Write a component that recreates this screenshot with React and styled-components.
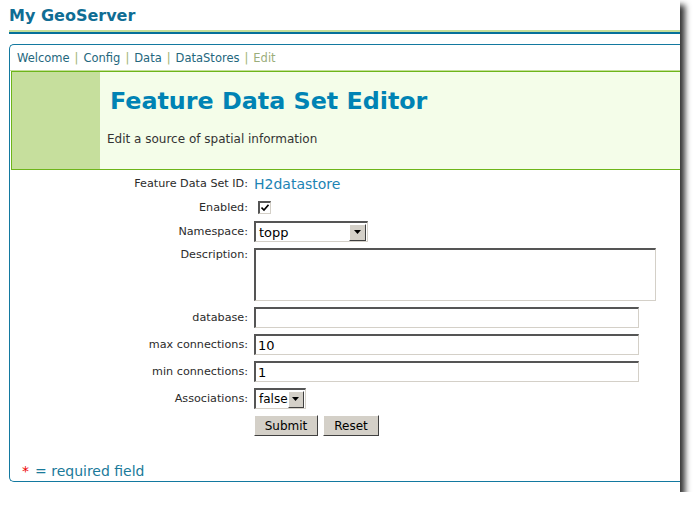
import React from 'react';
import styled, { createGlobalStyle } from 'styled-components';

const GlobalStyle = createGlobalStyle`
  html, body {
    margin: 0;
    padding: 0;
    background: #fff;
  }
  body {
    font-family: 'DejaVu Sans', Verdana, sans-serif;
  }
`;

const Window = styled.div`
  width: 680px;
  height: 492px;
  background: #fff;
  overflow: hidden;
  padding-left: 9px;
  box-sizing: border-box;
  box-shadow: 5px 5px 6px rgba(0, 0, 0, 0.8);
`;

const SiteTitle = styled.h1`
  margin: 0 -10px 0 0;
  padding: 6px 0 4px 0;
  font-size: 16px;
  line-height: 20px;
  font-weight: bold;
  color: #0f6d94;
  border-bottom: 2px solid #c5dd9a;
`;

const TitleRule = styled.div`
  height: 2px;
  background: #06709a;
  margin-right: -10px;
`;

const Panel = styled.div`
  margin-top: 10px;
  margin-right: -20px;
  border: 1px solid #1379a0;
  border-right: none;
  border-radius: 5px 0 0 5px;
`;

const Crumbs = styled.div`
  height: 25px;
  line-height: 26px;
  padding-left: 7px;
  font-size: 11.5px;
  color: #24677d;
  border-bottom: 1px solid #c5dd9a;
`;

const Crumb = styled.span`
  color: ${(p) => (p.$current ? '#9bae7b' : '#24677d')};
`;

const Sep = styled.span`
  color: #9fb46f;
  margin: 0 5px;
`;

const Header = styled.div`
  display: flex;
  margin-left: 1px;
  border: 1px solid #6db51a;
  border-right: none;
  height: 97px;
  background: #f4fde9;
`;

const HeaderSide = styled.div`
  width: 88px;
  background: #c6df9d;
  flex-shrink: 0;
`;

const HeaderBody = styled.div`
  padding-left: 7px;
`;

const PageTitle = styled.h2`
  margin: 15px 0 0 0;
  padding-left: 3px;
  font-size: 23.8px;
  line-height: 28px;
  font-weight: bold;
  color: #0083b4;
`;

const PageSub = styled.p`
  margin: 16px 0 0 0;
  font-size: 12px;
  line-height: 16px;
  color: #333;
`;

const Form = styled.div`
  display: grid;
  grid-template-columns: 238px 1fr;
  column-gap: 6px;
  row-gap: 6px;
  padding-top: 4px;
`;

const Label = styled.div`
  text-align: right;
  font-size: 11.2px;
  line-height: 14px;
  color: #2b2b2b;
  align-self: ${(p) => (p.$top ? 'start' : 'center')};
`;

const Field = styled.div`
  display: flex;
  align-items: center;
  min-height: ${(p) => p.$h || 21}px;
`;

const IdValue = styled.span`
  font-size: 14px;
  line-height: 20px;
  color: #1c84b4;
`;

const Check = styled.span`
  display: inline-flex;
  align-items: center;
  justify-content: center;
  box-sizing: border-box;
  width: 13px;
  height: 13px;
  margin-left: 4px;
  background: #fff;
  border-top: 2px solid #555;
  border-left: 2px solid #555;
  border-right: 1px solid #d4d0c8;
  border-bottom: 1px solid #d4d0c8;
`;

const inset = `
  box-sizing: border-box;
  background: #fff;
  border-top: 2px solid #555;
  border-left: 2px solid #555;
  border-right: 1px solid #d4d0c8;
  border-bottom: 1px solid #d4d0c8;
`;

const TextInput = styled.input`
  ${inset}
  width: ${(p) => p.$w}px;
  height: 21px;
  padding: 0 2px;
  font-family: 'DejaVu Sans', Verdana, sans-serif;
  font-size: 13px;
  color: #000;
  outline: none;
`;

const TextArea = styled.textarea`
  ${inset}
  width: 402px;
  height: 53px;
  margin: 0;
  resize: none;
  outline: none;
`;

const SelectBox = styled.div`
  ${inset}
  display: flex;
  align-items: center;
  width: ${(p) => p.$w}px;
  height: 21px;
  padding: 0 1px 0 3px;
`;

const SelectValue = styled.span`
  flex: 1;
  font-size: ${(p) => p.$size || 13}px;
  color: #000;
`;

const ArrowButton = styled.span`
  display: flex;
  align-items: center;
  justify-content: center;
  box-sizing: border-box;
  width: 17px;
  height: 17px;
  background: #d4d0c8;
  border-top: 1px solid #fff;
  border-left: 1px solid #fff;
  border-right: 1px solid #404040;
  border-bottom: 1px solid #404040;
`;

const Buttons = styled.div`
  display: flex;
  gap: 5px;
`;

const Button = styled.button`
  box-sizing: border-box;
  width: ${(p) => p.$w}px;
  height: 21px;
  padding: 0;
  background: #d4d0c8;
  border-top: 1px solid #fff;
  border-left: 1px solid #fff;
  border-right: 1px solid #404040;
  border-bottom: 1px solid #404040;
  font-family: 'DejaVu Sans', Verdana, sans-serif;
  font-size: 12px;
  color: #000;
`;

const Footer = styled.div`
  margin-top: 25px;
  padding-left: 12px;
  font-size: 14px;
  line-height: 20px;
  color: #1a7a9a;
`;

const Star = styled.span`
  color: #e00;
  margin-right: 6px;
`;

const Arrow = () => (
  <svg width="7" height="4" viewBox="0 0 7 4">
    <path d="M0 0h7L3.5 4z" fill="#000" />
  </svg>
);

const Select = ({ value, width, size }) => (
  <SelectBox $w={width}>
    <SelectValue $size={size}>{value}</SelectValue>
    <ArrowButton>
      <Arrow />
    </ArrowButton>
  </SelectBox>
);

const crumbs = ['Welcome', 'Config', 'Data', 'DataStores'];

export default function App() {
  return (
    <>
      <GlobalStyle />
      <Window>
        <SiteTitle>My GeoServer</SiteTitle>
        <TitleRule />
        <Panel>
          <Crumbs>
            {crumbs.map((c) => (
              <React.Fragment key={c}>
                <Crumb>{c}</Crumb>
                <Sep>|</Sep>
              </React.Fragment>
            ))}
            <Crumb $current>Edit</Crumb>
          </Crumbs>
          <Header>
            <HeaderSide />
            <HeaderBody>
              <PageTitle>Feature Data Set Editor</PageTitle>
              <PageSub>Edit a source of spatial information</PageSub>
            </HeaderBody>
          </Header>
          <Form>
            <Label>Feature Data Set ID:</Label>
            <Field $h={20}>
              <IdValue>H2datastore</IdValue>
            </Field>

            <Label>Enabled:</Label>
            <Field $h={15}>
              <Check>
                <svg width="8" height="8" viewBox="0 0 8 8">
                  <path d="M0.5 3.5L3 6L7.5 0.8" stroke="#000" strokeWidth="1.6" fill="none" />
                </svg>
              </Check>
            </Field>

            <Label>Namespace:</Label>
            <Field>
              <Select value="topp" width={114} />
            </Field>

            <Label $top>Description:</Label>
            <Field $h={53}>
              <TextArea />
            </Field>

            <Label>database:</Label>
            <Field>
              <TextInput $w={385} defaultValue="" />
            </Field>

            <Label>max connections:</Label>
            <Field>
              <TextInput $w={385} defaultValue="10" />
            </Field>

            <Label>min connections:</Label>
            <Field>
              <TextInput $w={385} defaultValue="1" />
            </Field>

            <Label>Associations:</Label>
            <Field>
              <Select value="false" width={52} size={12} />
            </Field>

            <span />
            <Buttons>
              <Button $w={64}>Submit</Button>
              <Button $w={56}>Reset</Button>
            </Buttons>
          </Form>
          <Footer>
            <Star>*</Star>= required field
          </Footer>
        </Panel>
      </Window>
    </>
  );
}
